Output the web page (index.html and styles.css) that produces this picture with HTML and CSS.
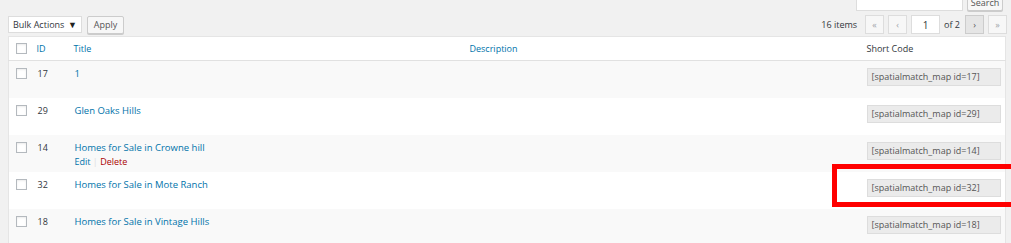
FILE: index.html
```html
<!DOCTYPE html>
<html lang="en">
<head>
    <meta charset="UTF-8">
    <title>Maps</title>
    <link rel="stylesheet" href="styles.css">
</head>
<body>
    <div class="wrap">
        <div class="search-box">
            <input type="search" class="search-input">
            <button class="button">Search</button>
        </div>

        <div class="tablenav">
            <div class="bulk">
                <div class="select">Bulk Actions <span class="arrow">&#9660;</span></div>
                <button class="button">Apply</button>
            </div>
            <div class="pages">
                <span class="count">16 items</span>
                <span class="page-btn">&laquo;</span>
                <span class="page-btn">&lsaquo;</span>
                <span class="page-input">1</span>
                <span class="of">of 2</span>
                <span class="page-btn active">&rsaquo;</span>
                <span class="page-btn">&raquo;</span>
            </div>
        </div>

        <table class="list">
            <colgroup>
                <col class="c-cb">
                <col class="c-id">
                <col class="c-title">
                <col class="c-desc">
                <col class="c-code">
            </colgroup>
            <thead>
                <tr>
                    <th><span class="cb"></span></th>
                    <th class="sort">ID</th>
                    <th class="sort">Title</th>
                    <th class="sort">Description</th>
                    <th>Short Code</th>
                </tr>
            </thead>
            <tbody>
                <tr class="alt">
                    <td><span class="cb"></span></td>
                    <td class="num">17</td>
                    <td><a class="row-title">1</a><div class="row-actions"><a>Edit</a> | <a class="del">Delete</a></div></td>
                    <td></td>
                    <td><span class="code">[spatialmatch_map id=17]</span></td>
                </tr>
                <tr>
                    <td><span class="cb"></span></td>
                    <td class="num">29</td>
                    <td><a class="row-title">Glen Oaks Hills</a><div class="row-actions"><a>Edit</a> | <a class="del">Delete</a></div></td>
                    <td></td>
                    <td><span class="code">[spatialmatch_map id=29]</span></td>
                </tr>
                <tr class="alt">
                    <td><span class="cb"></span></td>
                    <td class="num">14</td>
                    <td><a class="row-title">Homes for Sale in Crowne hill</a><div class="row-actions show"><a>Edit</a> <span class="sep">|</span> <a class="del">Delete</a></div></td>
                    <td></td>
                    <td><span class="code">[spatialmatch_map id=14]</span></td>
                </tr>
                <tr>
                    <td><span class="cb"></span></td>
                    <td class="num">32</td>
                    <td><a class="row-title">Homes for Sale in Mote Ranch</a><div class="row-actions"><a>Edit</a> | <a class="del">Delete</a></div></td>
                    <td></td>
                    <td><span class="code">[spatialmatch_map id=32]</span></td>
                </tr>
                <tr class="alt">
                    <td><span class="cb"></span></td>
                    <td class="num">18</td>
                    <td><a class="row-title">Homes for Sale in Vintage Hills</a><div class="row-actions"><a>Edit</a> | <a class="del">Delete</a></div></td>
                    <td></td>
                    <td><span class="code">[spatialmatch_map id=18]</span></td>
                </tr>
            </tbody>
        </table>
    </div>

    <div class="highlight"></div>
</body>
</html>
```

FILE: styles.css
```css
/* Reset */
* {
    margin: 0;
    padding: 0;
    box-sizing: border-box;
}

body {
    font-family: 'Open Sans', 'Noto Sans', sans-serif;
    font-size: 9px;
    color: #32373c;
    background: #f1f1f1;
    overflow: hidden;
    position: relative;
    height: 243px;
}

.wrap {
    padding: 0 6px 0 8px;
}

/* Search box (cut off at top) */
.search-box {
    display: flex;
    justify-content: flex-end;
    gap: 4px;
    margin-top: -5px;
    padding-right: 2px;
    height: 16px;
}

.search-input {
    width: 107px;
    height: 16px;
    border: 1px solid #ddd;
    background: #fff;
}

.button {
    font-family: inherit;
    font-size: 9px;
    color: #555;
    background: #f7f7f7;
    border: 1px solid #ccc;
    border-radius: 2px;
    box-shadow: 0 1px 0 #ccc;
    padding: 0 6px;
    height: 18px;
}

.search-box .button {
    height: 16px;
    width: 36px;
    padding: 0;
    line-height: 14px;
}

/* Table nav */
.tablenav {
    display: flex;
    justify-content: space-between;
    align-items: center;
    height: 19px;
    margin-top: 4px;
    margin-bottom: 2px;
}

.bulk {
    display: flex;
    gap: 5px;
    align-items: center;
}

.select {
    width: 74px;
    height: 17px;
    background: #fff;
    border: 1px solid #ddd;
    display: flex;
    align-items: center;
    justify-content: space-between;
    padding: 0 4px 0 4px;
    color: #32373c;
}

.arrow {
    font-size: 9px;
    color: #222;
}

.bulk .button {
    width: 37px;
    padding: 0;
}

.pages {
    display: flex;
    align-items: center;
    gap: 4px;
    margin-right: -2px;
}

.count {
    margin-right: 4px;
}

.page-btn {
    width: 19px;
    height: 19px;
    display: flex;
    align-items: center;
    justify-content: center;
    background: #f7f7f7;
    border: 1px solid #ddd;
    color: #a0a5aa;
    font-size: 9px;
}

.page-btn.active {
    background: #e5e5e5;
    border-color: #ccc;
    color: #555;
}

.page-input {
    width: 29px;
    height: 19px;
    border: 1px solid #ddd;
    background: #fff;
    display: flex;
    align-items: center;
    justify-content: center;
    color: #32373c;
    font-size: 10px;
}

.of {
    margin-right: 1px;
}

/* List table */
.list {
    width: 997px;
    border: 1px solid #e5e5e5;
    border-collapse: collapse;
    table-layout: fixed;
    background: #fff;
}

.c-cb { width: 21px; }
.c-id { width: 37px; }
.c-title { width: 396px; }
.c-desc { width: 397px; }
.c-code { width: 146px; }

thead th {
    height: 24px;
    text-align: left;
    font-weight: normal;
    padding: 0 7px;
    border-bottom: 1px solid #e1e1e1;
    vertical-align: middle;
}

thead th:first-child {
    padding: 0 0 0 7px;
}

.sort {
    color: #0073aa;
}

tbody td {
    height: 37px;
    padding: 6px 7px 0;
    vertical-align: top;
    line-height: 14px;
}

tbody td:first-child {
    padding: 7px 0 0 7px;
}

tbody tr.alt {
    background: #f9f9f9;
}

.num {
    padding-left: 8px;
}

.cb {
    display: block;
    width: 11px;
    height: 11px;
    border: 1px solid #b4b9be;
    background: #fff;
    box-shadow: inset 0 1px 2px rgba(0, 0, 0, 0.08);
}

.row-title {
    color: #0073aa;
    font-size: 9.5px;
    padding-left: 1px;
}

.row-actions {
    color: #ddd;
    visibility: hidden;
    padding-left: 1px;
}

.row-actions.show {
    visibility: visible;
}

.row-actions a {
    color: #0073aa;
}

.row-actions a.del {
    color: #a00;
}

.code {
    display: block;
    width: 134px;
    height: 18px;
    margin-top: 1px;
    background: #ebebeb;
    border: 1px solid #ddd;
    color: #555;
    line-height: 16px;
    padding-left: 4px;
    white-space: nowrap;
    overflow: hidden;
}

/* Annotation box */
.highlight {
    position: absolute;
    left: 832px;
    top: 164px;
    width: 190px;
    height: 43px;
    border: 5px solid #f00;
}
```
